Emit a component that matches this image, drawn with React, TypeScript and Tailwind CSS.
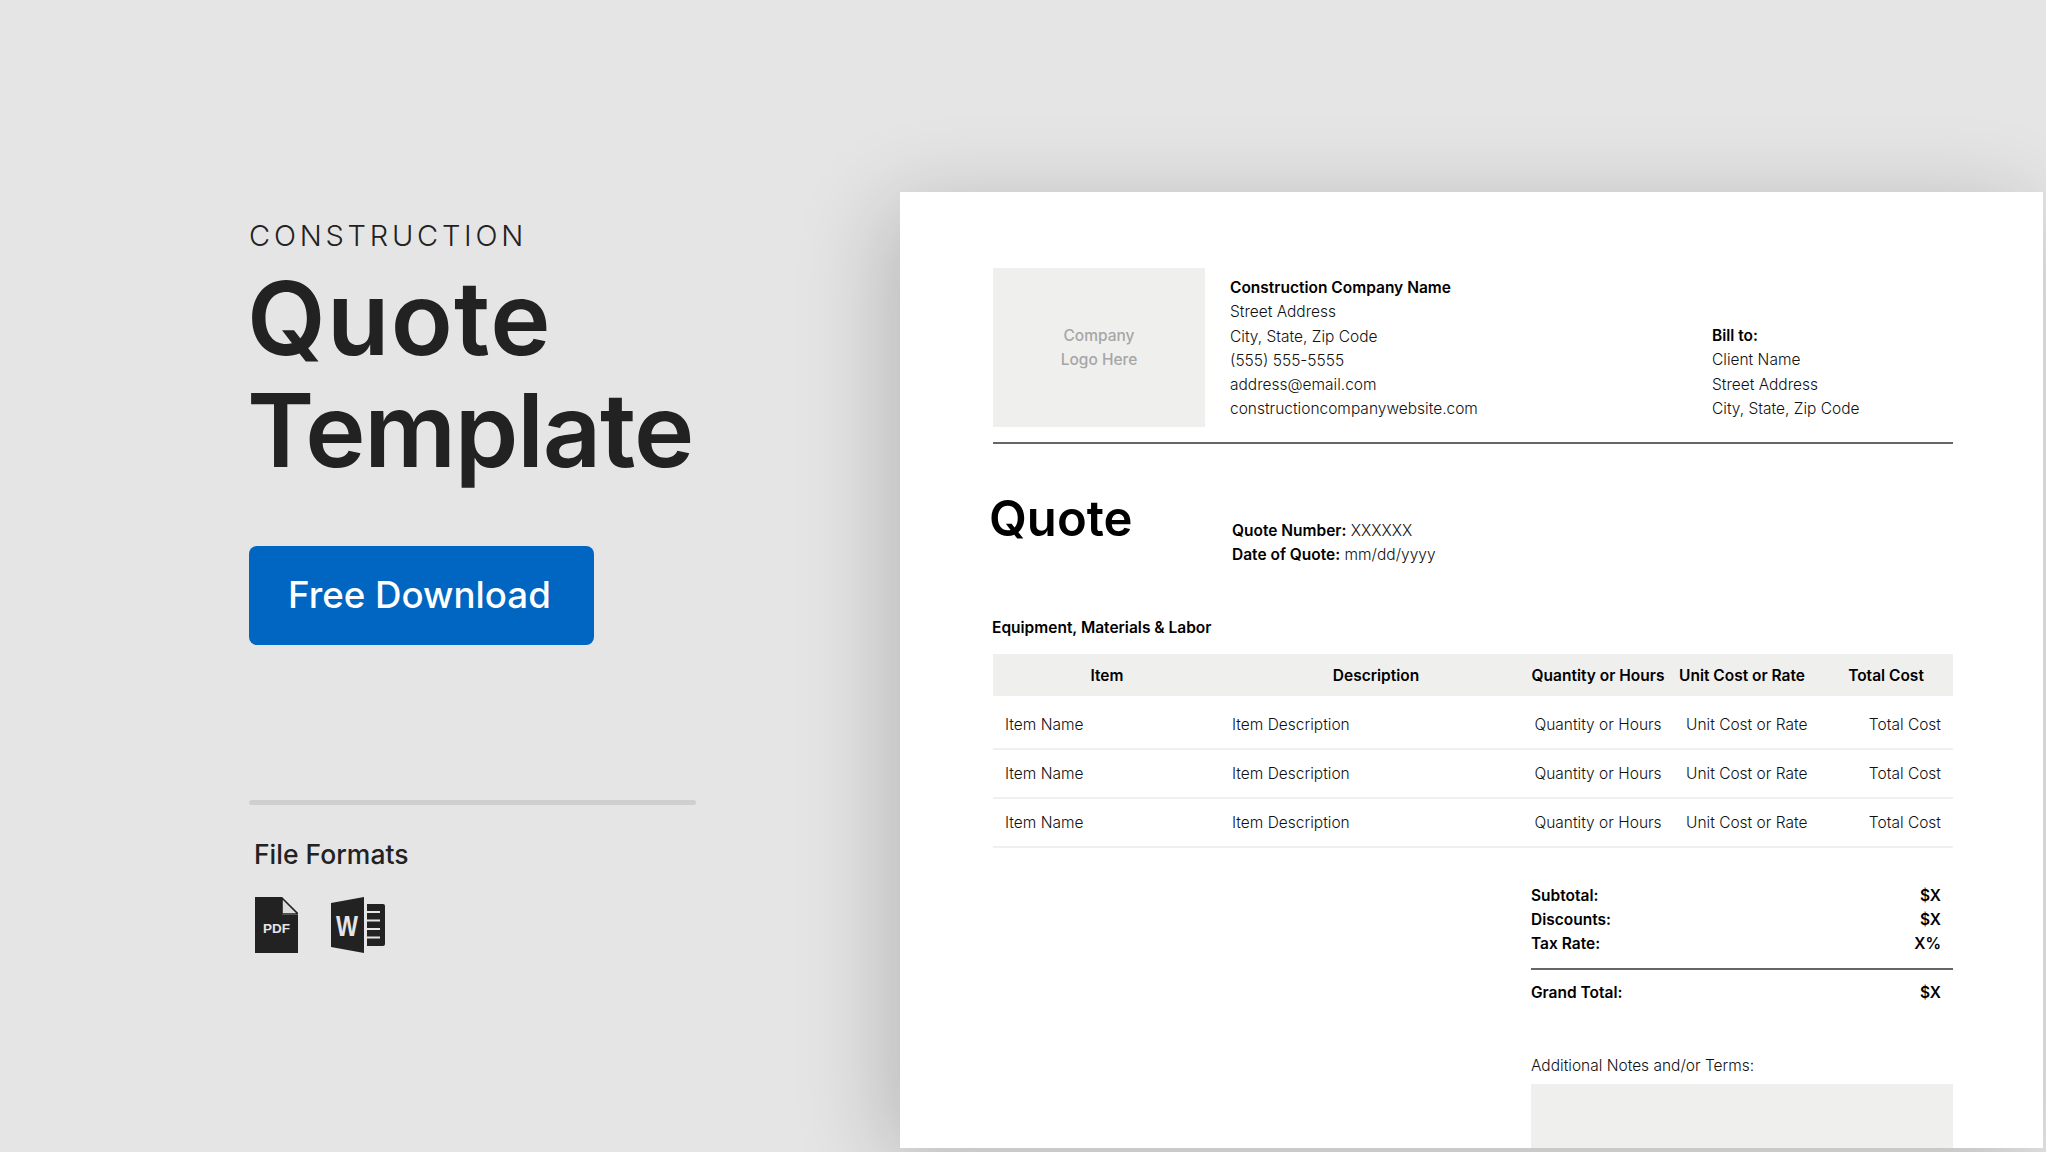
const grid = "grid-cols-[228px_310px_134px_154px_134px]";
const S = "font-semibold text-black";

function PdfIcon() {
  return (
    <svg width="43" height="56" viewBox="0 0 43 56" className="block">
      <path d="M0 0H27V18H43V56H0Z" fill="#222" />
      <path d="M27 1L43 17H27Z" fill="#dcdcdc" stroke="#222" strokeWidth="1.6" />
      <text x="21.5" y="36" textAnchor="middle" fontFamily="Liberation Sans, sans-serif" fontWeight="700" fontSize="13.5" fill="#e5e5e5">PDF</text>
    </svg>
  );
}

function WordIcon() {
  return (
    <svg width="54" height="56" viewBox="0 0 54 56" className="block">
      <path d="M0 6L33 0V56L0 50Z" fill="#222" />
      <path d="M36 7H52Q54 7 54 9V47Q54 49 52 49H36Z" fill="#222" />
      <path d="M36 15H49M36 23.5H49M36 32H49M36 40.5H49" stroke="#e5e5e5" strokeWidth="2" />
      <text x="5" y="39" textLength="22" lengthAdjust="spacingAndGlyphs" fontFamily="Liberation Sans, sans-serif" fontWeight="700" fontSize="29" fill="#e5e5e5">W</text>
    </svg>
  );
}

const rows = [0, 1, 2];

export default function App() {
  return (
    <div className="flex h-[1152px] w-[2046px] overflow-hidden bg-[#e5e5e5] font-['Inter',sans-serif] text-[#222]">
      <div className="flex w-[900px] shrink-0 flex-col items-start pl-[249px] pt-[216px]">
        <div className="text-[29px] leading-[40px] font-light tracking-[0.13em]">CONSTRUCTION</div>
        <h1 className="mt-[6px] ml-[-2px] text-[102px] leading-[112px] font-semibold tracking-[-0.012em]">
          <span className="tracking-[0.012em]">Quote</span>
          <br />
          Template
        </h1>
        <button className="mt-[60px] flex h-[99px] w-[345px] items-center rounded-lg bg-[#0166c1] pb-[1px] pl-[39px] text-[36.7px] font-medium text-white">
          Free Download
        </button>
        <div className="mt-[155px] h-[5px] w-[447px] rounded-full bg-[#cfcfcf]" />
        <div className="mt-[31px] pl-[5px] text-[26.5px] leading-[36px] font-medium">File Formats</div>
        <div className="mt-[25px] flex items-start gap-[33px] pl-[6px]">
          <PdfIcon />
          <WordIcon />
        </div>
      </div>

      <div className="mt-[192px] h-[956px] w-[1143px] shrink-0 overflow-hidden bg-white pl-[93px] pr-[90px] pt-[76px] text-[15.5px] leading-[24.3px] font-light text-[#111] shadow-[-14px_14px_85px_rgba(0,0,0,0.2)]">
        <div className="flex h-[176px] border-b-2 border-[#666]">
          <div className="flex h-[159px] w-[212px] shrink-0 flex-col items-center justify-center bg-[#efefee] pt-[1px] font-medium text-[#a6a6a6]">
            <span>Company</span>
            <span>Logo Here</span>
          </div>
          <div className="ml-[25px] w-[482px] pt-[8px]">
            <div className={S}>Construction Company Name</div>
            <div>Street Address</div>
            <div>City, State, Zip Code</div>
            <div>(555) 555-5555</div>
            <div>address@email.com</div>
            <div>constructioncompanywebsite.com</div>
          </div>
          <div className="pt-[56px]">
            <div className={S}>Bill to:</div>
            <div>Client Name</div>
            <div>Street Address</div>
            <div>City, State, Zip Code</div>
          </div>
        </div>

        <div className="mt-[45px] flex items-start">
          <div className="ml-[-4px] w-[243px] text-[49px] leading-[60px] font-semibold text-black">Quote</div>
          <div className="pt-[30px]">
            <div>
              <span className={S}>Quote Number:</span> XXXXXX
            </div>
            <div>
              <span className={S}>Date of Quote:</span> mm/dd/yyyy
            </div>
          </div>
        </div>

        <div className={`mt-[48px] ml-[-1px] ${S}`}>Equipment, Materials &amp; Labor</div>

        <div className={`mt-[14px] grid h-[42px] ${grid} items-center bg-[#efefee] pt-[2px] text-center ${S}`}>
          <div>Item</div>
          <div>Description</div>
          <div>Quantity or Hours</div>
          <div>Unit Cost or Rate</div>
          <div>Total Cost</div>
        </div>
        <div className="pt-[5px]">
          {rows.map((r) => (
            <div key={r} className={`grid h-[49px] ${grid} items-center border-b-2 border-[#f0f0f0] pt-[1px]`}>
              <div className="pl-[12px]">Item Name</div>
              <div className="pl-[11px]">Item Description</div>
              <div className="text-center">Quantity or Hours</div>
              <div className="pl-[21px]">Unit Cost or Rate</div>
              <div className="pr-[12px] text-right">Total Cost</div>
            </div>
          ))}
        </div>

        <div className="ml-[538px] mt-[36px]">
          <div className={`flex justify-between pr-[12px] ${S}`}>
            <span>Subtotal:</span>
            <span>$X</span>
          </div>
          <div className={`flex justify-between pr-[12px] ${S}`}>
            <span>Discounts:</span>
            <span>$X</span>
          </div>
          <div className={`flex justify-between pr-[12px] ${S}`}>
            <span>Tax Rate:</span>
            <span>X%</span>
          </div>
          <div className={`mt-[11px] flex justify-between border-t-2 border-[#666] pt-[11px] pr-[12px] ${S}`}>
            <span>Grand Total:</span>
            <span>$X</span>
          </div>
          <div className="mt-[49px]">Additional Notes and/or Terms:</div>
          <div className="mt-[6px] h-[80px] bg-[#efefee]" />
        </div>
      </div>
    </div>
  );
}
